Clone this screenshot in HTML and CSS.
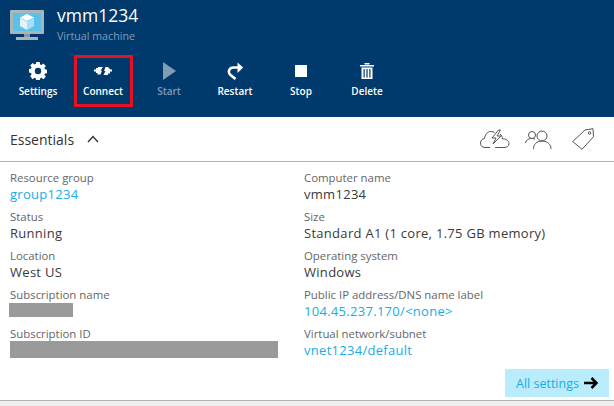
FILE: index.html
```html
<!DOCTYPE html>
<html lang="en">
<head>
<meta charset="utf-8">
<title>vmm1234</title>
<link rel="stylesheet" href="styles.css">
</head>
<body>
<header class="blade">
  <div class="title-row">
    <svg class="vm-icon" width="34" height="31" viewBox="0 0 34 31">
      <rect x="0" y="0" width="34" height="24" rx="1" fill="#a9b4bb"/>
      <rect x="3" y="3" width="28" height="18" fill="#5cc0e8"/>
      <rect x="14" y="24" width="6" height="3" fill="#8d979d"/>
      <rect x="6" y="27" width="22" height="3" fill="#a9b4bb"/>
      <path d="M17 4l7 3.500L17 11 10 7.500z" fill="#fff"/>
      <path d="M17 11.500L24 8v8l-7 4z" fill="#a8dff4"/>
      <path d="M17 11.500L10 8v8l7 4z" fill="#dff4fb"/>
    </svg>
    <div class="title-text">
      <div class="title">vmm1234</div>
      <div class="subtitle">Virtual machine</div>
    </div>
  </div>
  <nav class="toolbar">
    <div class="tool tool-first">
      <svg width="18" height="18" viewBox="0 0 18 18"><path fill="#fff" fill-rule="evenodd" d="M7.300 0h3.400l.4 2.400 1.300.6 2-1.400 2.400 2.400-1.400 2 .6 1.300 2.400.4v3.400l-2.400.4-.6 1.300 1.400 2-2.400 2.400-2-1.400-1.300.6-.4 2.400H7.300l-.4-2.400-1.300-.6-2 1.400L1.200 14.200l1.400-2-.6-1.300L-.4 10.500V7.100L2 6.700l.6-1.300-1.400-2L3.600 1l2 1.400 1.300-.6zM9 5.800a3 3 0 1 0 0 6.400 3 3 0 0 0 0-6.400z"/></svg>
      <span>Settings</span>
    </div>
    <div class="tool tool-connect">
      <svg width="18" height="18" viewBox="0 0 18 18"><path fill="#fff" d="M0 7.500h2V6h2V5h5L6.500 8.500H8L6.500 12.500H3.500V11H2V9.500H0zM18 9.500h-2v2h-2v1.500H9.500L11.500 9H10L11.500 5h3V6.500H16v1h2z"/></svg>
      <span>Connect</span>
    </div>
    <div class="tool disabled">
      <svg width="18" height="18" viewBox="0 0 18 18"><path fill="#fff" d="M3 0l13 9-13 9z"/></svg>
      <span>Start</span>
    </div>
    <div class="tool">
      <svg width="18" height="18" viewBox="0 0 18 18"><path fill="none" stroke="#fff" stroke-width="2.600" d="M9.500 17L4 12.500C1.800 10 3 5.500 7.500 5.500H13"/><path fill="#fff" d="M11.500 .5L17.200 5.500 11.500 11z"/></svg>
      <span>Restart</span>
    </div>
    <div class="tool">
      <svg width="18" height="18" viewBox="0 0 18 18"><rect x="3" y="3" width="12" height="12" fill="#fff"/></svg>
      <span>Stop</span>
    </div>
    <div class="tool">
      <svg width="18" height="18" viewBox="0 0 18 18"><path fill="#fff" fill-rule="evenodd" d="M2 3h14v1.500H2zM6.500 1h5v1.500h-5zM3.500 5.500h11V17h-11zM5.500 7v8.500h1.200V7zM8.400 7v8.500h1.200V7zM11.300 7v8.500h1.200V7z"/></svg>
      <span>Delete</span>
    </div>
  </nav>
</header>
<main class="content">
  <div class="essentials-bar">
    <div class="essentials-title">
      <span>Essentials</span>
      <svg width="12" height="8" viewBox="0 0 12 8"><path fill="none" stroke="#333" stroke-width="1.300" d="M1 7l5-5.500L11 7"/></svg>
    </div>
    <div class="essentials-icons">
      <svg class="icon-cloud" width="30" height="20" viewBox="0 0 30 20"><path fill="none" stroke="#555" d="M10 18.500H5C2 18.500 .5 16.500 .5 14s2-4.500 4-4.500C5 6 7 2.500 11 2.500c1.500 0 2.500.5 3.500 1M20 5c1.500 1 2.500 3 2.500 5 3-.5 6.500 1.500 6.500 4.500s-2.500 4-5 4H15"/><path fill="none" stroke="#555" d="M18.500 1L12 9h4l-3 6 8-8h-4l3.500-6z"/></svg>
      <svg class="icon-people" width="27" height="19" viewBox="0 0 27 19"><g fill="none" stroke="#555"><circle cx="7" cy="5" r="3.500"/><path d="M.5 13c.5-3 3-4.500 6-4.500M8 8.500l2 .8"/><circle cx="17" cy="6" r="5"/><path d="M8.500 19c0-4.500 3-8 8.500-8s9 3.500 9 8"/></g></svg>
      <svg class="icon-tag" width="22" height="22" viewBox="0 0 22 22"><g fill="none" stroke="#555"><path d="M.7 13.500L13 2l8-1.300.5 8L10 21.300z"/><circle cx="17.500" cy="5" r="1.300"/></g></svg>
    </div>
  </div>
  <div class="grid">
    <div class="col">
      <div class="field"><div class="label">Resource group</div><div class="value link">group1234</div></div>
      <div class="field"><div class="label">Status</div><div class="value">Running</div></div>
      <div class="field"><div class="label">Location</div><div class="value">West US</div></div>
      <div class="field"><div class="label">Subscription name</div><div class="redact redact-name"></div></div>
      <div class="field"><div class="label">Subscription ID</div><div class="redact redact-id"></div></div>
    </div>
    <div class="col">
      <div class="field"><div class="label">Computer name</div><div class="value">vmm1234</div></div>
      <div class="field"><div class="label">Size</div><div class="value">Standard A1 (1 core, 1.75 GB memory)</div></div>
      <div class="field"><div class="label">Operating system</div><div class="value">Windows</div></div>
      <div class="field"><div class="label">Public IP address/DNS name label</div><div class="value link">104.45.237.170/&lt;none&gt;</div></div>
      <div class="field"><div class="label">Virtual network/subnet</div><div class="value link">vnet1234/default</div></div>
    </div>
  </div>
  <div class="footer-row">
    <div class="all-settings">
      <span>All settings</span>
      <svg width="14" height="12" viewBox="0 0 14 12"><path fill="none" stroke="#000" stroke-width="2.500" d="M0 6h12M7.500 1l5 5-5 5"/></svg>
    </div>
  </div>
</main>
<div class="bottom-strip"></div>
</body>
</html>
```
FILE: styles.css
```css
*, *::before { box-sizing: border-box; }
html, body { margin: 0; padding: 0; }
body {
  width: 614px;
  height: 406px;
  overflow: hidden;
  background: #fff;
  font-family: "Open Sans", "Noto Sans", sans-serif;
  display: flex;
  flex-direction: column;
}
.blade {
  height: 117px;
  background: #003a6c;
  color: #fff;
  padding: 10px 0 0 10px;
  flex: none;
}
.title-row { display: flex; height: 32px; }
.vm-icon { flex: none; margin-right: 13px; }
.title { font-size: 17.500px; line-height: 24px; margin-top: -7px; }
.subtitle { font-size: 10.700px; line-height: 14px; color: #7f9db8; margin-top: 2px; }
.toolbar { display: flex; margin-top: 20px; margin-left: -6px; }
.tool {
  width: 66px;
  display: flex;
  flex-direction: column;
  align-items: center;
  gap: 4px;
  font-size: 10px;
  line-height: 15px;
  font-weight: 600;
  color: #fff;
  white-space: nowrap;
}
.tool svg { display: block; flex: none; }
.tool-first { padding-left: 2px; }
.tool-connect { position: relative; }
.tool-connect::before {
  content: "";
  position: absolute;
  left: 4px;
  top: -7px;
  width: 59px;
  height: 52px;
  border: 3px solid #e81123;
}
.disabled { color: #7f9db8; }
.disabled svg { opacity: .5; }
.content { flex: 1; display: flex; flex-direction: column; }
.essentials-bar {
  height: 45px;
  border-bottom: 1px solid #b3b3b3;
  display: flex;
  justify-content: space-between;
  align-items: center;
  padding: 0 20px 0 10px;
  flex: none;
}
.essentials-title { display: flex; align-items: center; gap: 13px; font-size: 14px; color: #333; }
.essentials-icons { display: flex; align-items: center; }
.essentials-icons svg { display: block; }
.icon-people { margin-left: 15px; }
.icon-tag { margin-left: 20px; }
.grid { display: grid; grid-template-columns: 294px 1fr; padding: 7px 0 0 10px; flex: none; }
.field { height: 39px; }
.label { font-size: 11.400px; line-height: 17px; color: #666; }
.value { font-size: 13px; line-height: 17px; color: #3a3a3a; letter-spacing: .29px; }
.link { color: #19ace6; }
.redact { background: #9a9a9a; }
.redact-name { width: 64px; height: 14px; margin-left: -1px; }
.redact-id { width: 268px; height: 17px; margin-top: -1px; }
.footer-row { display: flex; justify-content: flex-end; padding-right: 5px; margin-top: 5px; }
.all-settings {
  width: 104px;
  height: 28px;
  background: #b9edfd;
  color: #19ace6;
  font-size: 12.500px;
  display: flex;
  align-items: center;
  gap: 5px;
  padding-left: 11px;
}
.bottom-strip { flex: none; height: 6px; background: #eee; border-top: 1px solid #b3b3b3; }
```
